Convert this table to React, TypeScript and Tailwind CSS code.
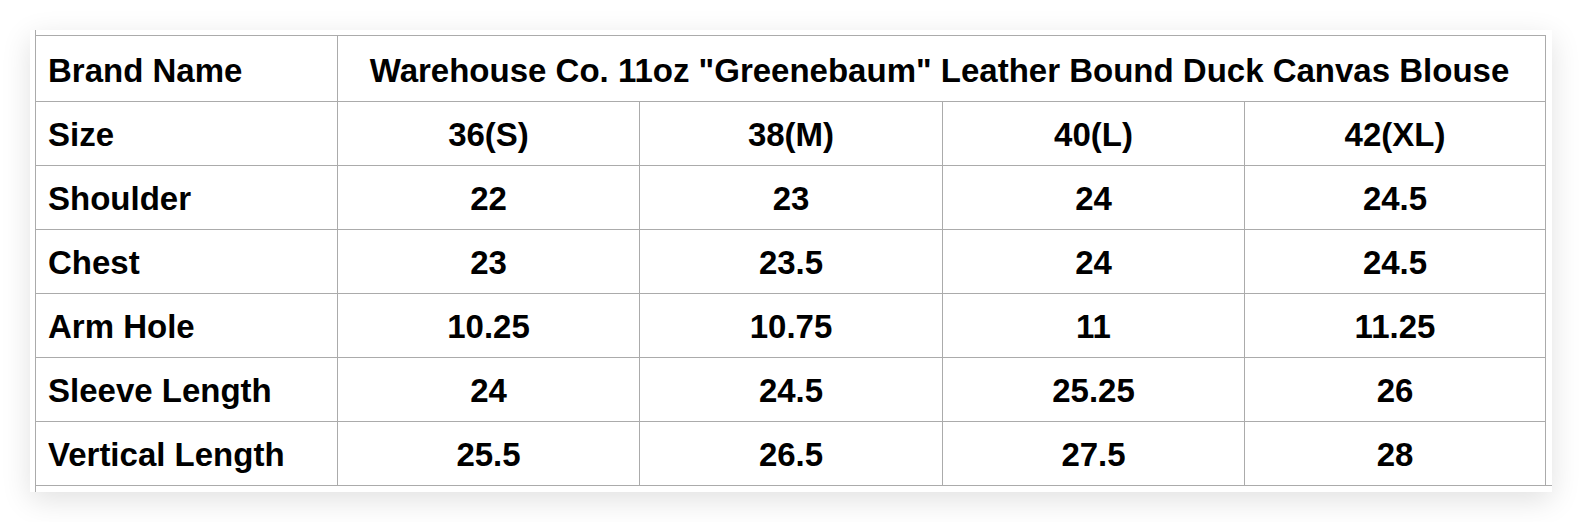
const rows: { label: string; values: string[] }[] = [
  { label: 'Size', values: ['36(S)', '38(M)', '40(L)', '42(XL)'] },
  { label: 'Shoulder', values: ['22', '23', '24', '24.5'] },
  { label: 'Chest', values: ['23', '23.5', '24', '24.5'] },
  { label: 'Arm Hole', values: ['10.25', '10.75', '11', '11.25'] },
  { label: 'Sleeve Length', values: ['24', '24.5', '25.25', '26'] },
  { label: 'Vertical Length', values: ['25.5', '26.5', '27.5', '28'] },
];

const line = 'border-[#ababab]';

export default function App() {
  return (
    <div className="min-h-screen bg-white p-[30px] font-['Liberation_Sans',Arial,sans-serif] text-[33px] font-bold text-black">
      {/* card */}
      <div className="flex h-[462px] w-[1522px] bg-white pl-[5px] shadow-[0_8px_28px_rgba(0,0,0,0.12)]">
        <div className={`h-full border-l ${line} pt-[5px]`}>
          <div className={`w-[1516px] border-b ${line}`}>
            <div
              className={`grid w-[1510px] grid-cols-[302px_302px_303px_302px_301px] border-t ${line}`}
            >
              {/* header row */}
              <div className={`flex h-[66px] items-center border-r border-b ${line} pt-[3px] pl-[12px] leading-none`}>
                Brand Name
              </div>
              <div
                className={`col-span-4 flex h-[66px] items-center justify-center border-r border-b ${line} pt-[3px] pr-[4px] leading-none`}
              >
                Warehouse Co. 11oz &quot;Greenebaum&quot; Leather Bound Duck Canvas Blouse
              </div>

              {rows.map((row, i) => {
                const last = i === rows.length - 1;
                const cell = last
                  ? `h-[63px] border-r ${line}`
                  : `h-[64px] border-r border-b ${line}`;
                return (
                  <div key={row.label} className="contents">
                    <div className={`flex items-center pt-[2px] pl-[12px] leading-none ${cell}`}>{row.label}</div>
                    {row.values.map((v, j) => (
                      <div key={j} className={`flex items-center justify-center pt-[2px] leading-none ${cell}`}>
                        {v}
                      </div>
                    ))}
                  </div>
                );
              })}
            </div>
          </div>
        </div>
      </div>
    </div>
  );
}
